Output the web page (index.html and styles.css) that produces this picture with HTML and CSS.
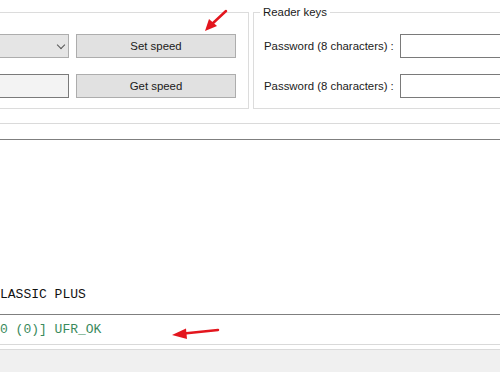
FILE: index.html
```html
<!DOCTYPE html>
<html lang="en">
<head>
  <meta charset="UTF-8" />
  <meta name="viewport" content="width=device-width, initial-scale=1.0"/>
  <title>Reader settings</title>
  <link rel="stylesheet" href="styles.css">
</head>
<body>
  <div class="window">
    <div class="top">
      <div class="group group-speed">
        <div class="combo"><span class="caret"></span></div>
        <button class="btn">Set speed</button>
        <div class="textbox textbox-ro"></div>
        <button class="btn">Get speed</button>
      </div>
      <div class="group group-keys">
        <span class="group-title">Reader keys</span>
        <label class="key-row">Password (8 characters) : <span class="textbox"></span></label>
        <label class="key-row">Password (8 characters) : <span class="textbox"></span></label>
      </div>
    </div>

    <div class="divider"></div>

    <div class="log">LASSIC PLUS</div>
    <div class="status">0 (0)] UFR_OK</div>
    <div class="footer"></div>

    <svg class="arrows" width="500" height="372" viewBox="0 0 500 372">
      <line x1="226" y1="11" x2="212" y2="24" stroke="#e3161e" stroke-width="2.5" stroke-linecap="round"/>
      <polygon points="205,31 209,19 217,26" fill="#e3161e"/>
      <line x1="218" y1="330" x2="184" y2="333.5" stroke="#e3161e" stroke-width="2.5" stroke-linecap="round"/>
      <polygon points="172,335 186,328.5 187,339" fill="#e3161e"/>
    </svg>
  </div>
</body>
</html>
```

FILE: styles.css
```css
body {
  margin: 0;
  font-family: "Liberation Sans", Arial, sans-serif;
  font-size: 11.4px;
  color: #1a1a1a;
  background: #fff;
}

.window {
  position: relative;
  width: 500px;
  height: 372px;
  overflow: hidden;
}

.top {
  display: flex;
  gap: 4px;
  padding-top: 12px;
  height: 124px;
  box-sizing: border-box;
  border-bottom: 1px solid #dadada;
}

.group {
  position: relative;
  height: 97px;
  border: 1px solid #dcdcdc;
  box-sizing: border-box;
}

.group-speed {
  flex: none;
  width: 269px;
  margin-left: -20px;
  display: grid;
  grid-template-columns: 1fr 160px;
  grid-template-rows: 24px 24px;
  column-gap: 7px;
  row-gap: 16px;
  padding: 21px 12px 0 0;
}

.group-keys {
  flex: none;
  width: 260px;
  padding: 21px 0 0 10px;
  display: flex;
  flex-direction: column;
  gap: 16px;
}

.group-title {
  position: absolute;
  top: -8px;
  left: 6px;
  padding: 0 3px;
  background: #fff;
  line-height: 15px;
}

.combo {
  position: relative;
  background: #e5e5e5;
  border: 1px solid #adadad;
}

.caret {
  position: absolute;
  right: 4px;
  top: 7px;
  width: 5px;
  height: 5px;
  border-right: 1px solid #555;
  border-bottom: 1px solid #555;
  transform: rotate(45deg);
}

.btn {
  font: inherit;
  color: #1a1a1a;
  background: #e1e1e1;
  border: 1px solid #adadad;
  padding: 0;
}

.textbox {
  display: block;
  background: #fff;
  border: 1px solid #7a7a7a;
  box-sizing: border-box;
}

.textbox-ro {
  background: #f3f3f3;
}

.key-row {
  display: flex;
  align-items: center;
  height: 24px;
  white-space: nowrap;
}

.key-row .textbox {
  flex: none;
  width: 120px;
  height: 24px;
  margin-left: 6px;
}

.divider {
  height: 16px;
  box-sizing: border-box;
  border-bottom: 1px solid #7f7f7f;
}

.log,
.status {
  font-family: "Liberation Mono", "Courier New", monospace;
  font-size: 13px;
  line-height: 15px;
  white-space: nowrap;
}

.log {
  height: 175px;
  box-sizing: border-box;
  display: flex;
  align-items: flex-end;
  padding-bottom: 12px;
  color: #111;
  border-bottom: 1px solid #7f7f7f;
}

.status {
  height: 30px;
  box-sizing: border-box;
  padding-top: 7px;
  color: #3a8a5c;
  border-bottom: 1px solid #d9d9d9;
}

.footer {
  margin-top: 4px;
  height: 30px;
  background: #f0f0f0;
  border-top: 1px solid #dadada;
}

.arrows {
  position: absolute;
  left: 0;
  top: 0;
  pointer-events: none;
}
```
